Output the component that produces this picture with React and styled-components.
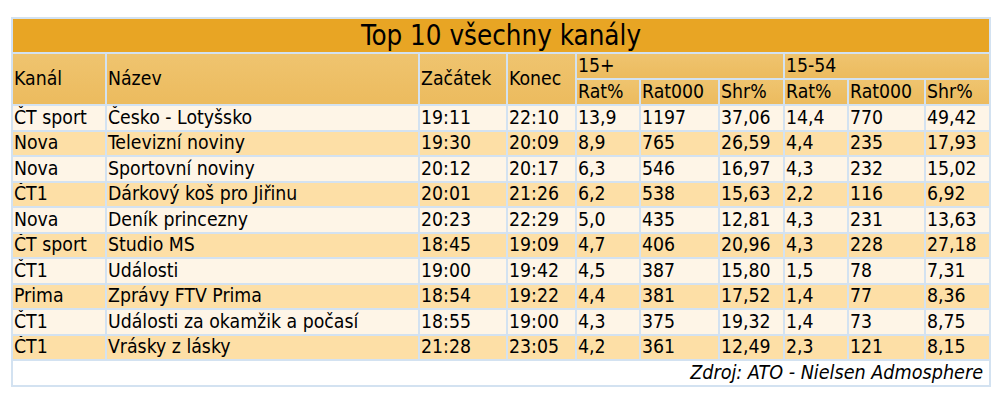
import React from "react";
import styled, { createGlobalStyle } from "styled-components";

const Global = createGlobalStyle`
  html, body { margin: 0; padding: 0; background: #ffffff; }
  body { font-family: "DejaVu Sans Condensed", "DejaVu Sans", sans-serif; color: #000; }
`;

const Page = styled.div`
  padding: 17px 0 0 11px;
`;

const Table = styled.table`
  width: 978px;
  table-layout: fixed;
  border-collapse: collapse;
  border: 2px solid #d3e2f1;
  font-size: 19.3px;
  line-height: 20px;
`;

const TitleCell = styled.th`
  background: #e8a524;
  font-weight: normal;
  font-size: 27.5px;
  height: 33px;
  padding: 0;
  text-align: center;
  border: 2px solid #d3e2f1;
  line-height: 33px;
`;

const HeadCell = styled.th`
  background: linear-gradient(#efc46f, #ecbb5e);
  font-weight: normal;
  text-align: left;
  padding: 0 0 0 1px;
  height: 24px;
  border: 2px solid #d3e2f1;
  white-space: nowrap;
  overflow: hidden;
`;

const Row = styled.tr`
  background: ${(p) => (p.$alt ? "#fddfa6" : "#fef5e7")};
`;

const Cell = styled.td`
  padding: 0 0 0 1px;
  height: 23.5px;
  border: 2px solid #d3e2f1;
  white-space: nowrap;
  overflow: hidden;
`;

const FootCell = styled.td`
  background: #ffffff;
  text-align: right;
  font-style: italic;
  font-size: 19.6px;
  padding: 0 6px 0 0;
  height: 24px;
  border: 2px solid #d3e2f1;
`;

const widths = [94, 313, 88, 69, 64, 79, 65, 64, 77, 65];

const rows = [
  ["ČT sport", "Česko - Lotyšsko", "19:11", "22:10", "13,9", "1197", "37,06", "14,4", "770", "49,42"],
  ["Nova", "Televizní noviny", "19:30", "20:09", "8,9", "765", "26,59", "4,4", "235", "17,93"],
  ["Nova", "Sportovní noviny", "20:12", "20:17", "6,3", "546", "16,97", "4,3", "232", "15,02"],
  ["ČT1", "Dárkový koš pro Jiřinu", "20:01", "21:26", "6,2", "538", "15,63", "2,2", "116", "6,92"],
  ["Nova", "Deník princezny", "20:23", "22:29", "5,0", "435", "12,81", "4,3", "231", "13,63"],
  ["ČT sport", "Studio MS", "18:45", "19:09", "4,7", "406", "20,96", "4,3", "228", "27,18"],
  ["ČT1", "Události", "19:00", "19:42", "4,5", "387", "15,80", "1,5", "78", "7,31"],
  ["Prima", "Zprávy FTV Prima", "18:54", "19:22", "4,4", "381", "17,52", "1,4", "77", "8,36"],
  ["ČT1", "Události za okamžik a počasí", "18:55", "19:00", "4,3", "375", "19,32", "1,4", "73", "8,75"],
  ["ČT1", "Vrásky z lásky", "21:28", "23:05", "4,2", "361", "12,49", "2,3", "121", "8,15"],
];

export default function App() {
  return (
    <Page>
      <Global />
      <Table>
        <colgroup>
          {widths.map((w, i) => (
            <col key={i} style={{ width: w }} />
          ))}
        </colgroup>
        <thead>
          <tr>
            <TitleCell colSpan={10}>Top 10 všechny kanály</TitleCell>
          </tr>
          <tr>
            <HeadCell rowSpan={2}>Kanál</HeadCell>
            <HeadCell rowSpan={2}>Název</HeadCell>
            <HeadCell rowSpan={2}>Začátek</HeadCell>
            <HeadCell rowSpan={2}>Konec</HeadCell>
            <HeadCell colSpan={3}>15+</HeadCell>
            <HeadCell colSpan={3}>15-54</HeadCell>
          </tr>
          <tr>
            <HeadCell>Rat%</HeadCell>
            <HeadCell>Rat000</HeadCell>
            <HeadCell>Shr%</HeadCell>
            <HeadCell>Rat%</HeadCell>
            <HeadCell>Rat000</HeadCell>
            <HeadCell>Shr%</HeadCell>
          </tr>
        </thead>
        <tbody>
          {rows.map((r, i) => (
            <Row key={i} $alt={i % 2 === 1}>
              {r.map((c, j) => (
                <Cell key={j}>{c}</Cell>
              ))}
            </Row>
          ))}
          <tr>
            <FootCell colSpan={10}>Zdroj: ATO - Nielsen Admosphere</FootCell>
          </tr>
        </tbody>
      </Table>
    </Page>
  );
}
